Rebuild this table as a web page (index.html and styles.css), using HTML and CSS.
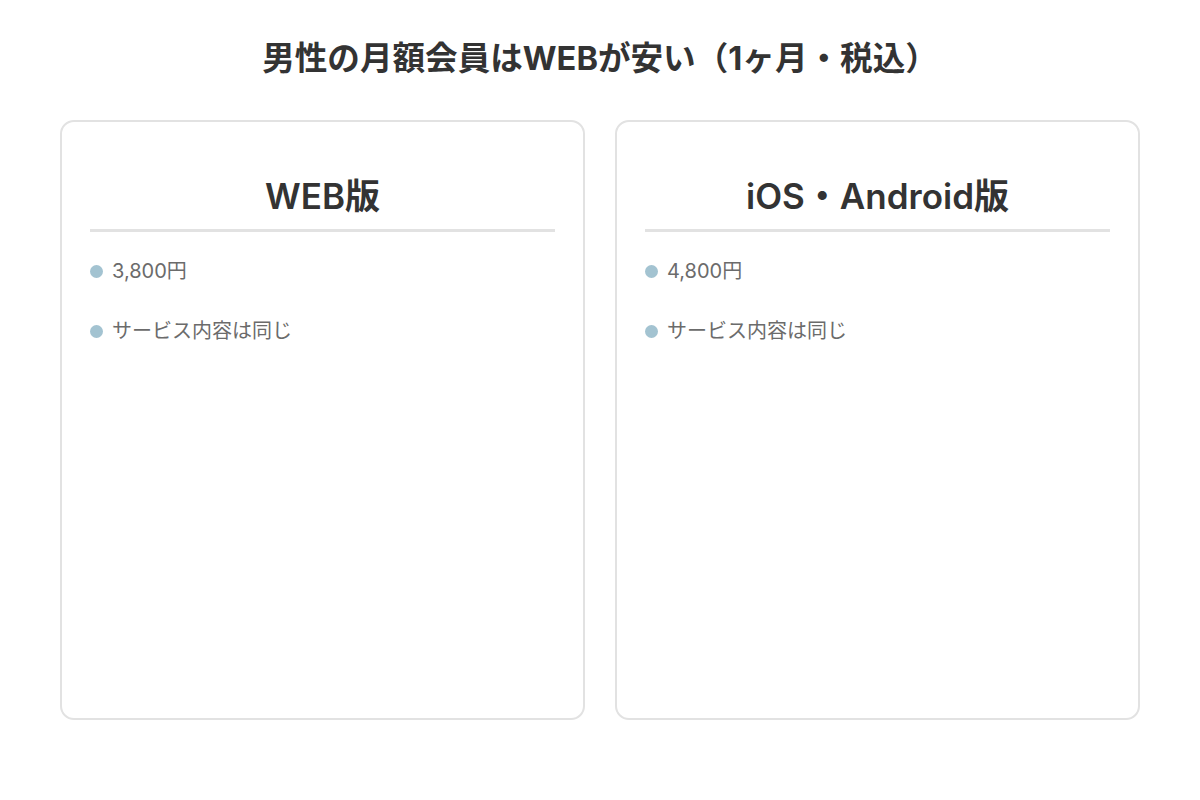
FILE: index.html
```html
<!DOCTYPE html>
<html lang="ja">
<head>
<meta charset="utf-8">
<link rel="stylesheet" href="styles.css">
</head>
<body>
<main class="page">
  <h2 class="title">男性の月額会員はWEBが安い（1ヶ月・税込）</h2>
  <div class="cards">
    <section class="card">
      <h3 class="card-head">WEB版</h3>
      <ul class="items">
        <li>3,800円</li>
        <li>サービス内容は同じ</li>
      </ul>
    </section>
    <section class="card">
      <h3 class="card-head">iOS・Android版</h3>
      <ul class="items">
        <li>4,800円</li>
        <li>サービス内容は同じ</li>
      </ul>
    </section>
  </div>
</main>
</body>
</html>
```
FILE: styles.css
```css
html, body {
  margin: 0;
  padding: 0;
  background: #ffffff;
}
body {
  font-family: "Inter", "Noto Sans CJK JP", sans-serif;
  color: #333333;
}
.page {
  padding: 36px 60px 0;
}
.title {
  margin: 0;
  text-align: center;
  font-size: 32.6px;
  font-weight: 700;
  line-height: 44px;
  color: #333333;
}
.cards {
  margin-top: 40px;
  display: grid;
  grid-template-columns: 1fr 1fr;
  gap: 30px;
}
.card {
  box-sizing: border-box;
  height: 600px;
  border: 2px solid #e2e2e2;
  border-radius: 14px;
  padding: 50px 28px 0;
}
.card-head {
  margin: 0;
  text-align: center;
  font-size: 35px;
  font-weight: 600;
  line-height: 48px;
  padding-bottom: 9px;
  border-bottom: 3px solid #e2e2e2;
  color: #333333;
}
.items {
  list-style: none;
  margin: 23px 0 0;
  padding: 0;
}
.items li {
  display: flex;
  align-items: center;
  gap: 9px;
  font-size: 20px;
  line-height: 32px;
  color: #6b6b6b;
}
.items li + li {
  margin-top: 28px;
}
.items li::before {
  content: "";
  width: 13px;
  height: 13px;
  border-radius: 50%;
  background: #a3c3d1;
  flex: none;
}
```
